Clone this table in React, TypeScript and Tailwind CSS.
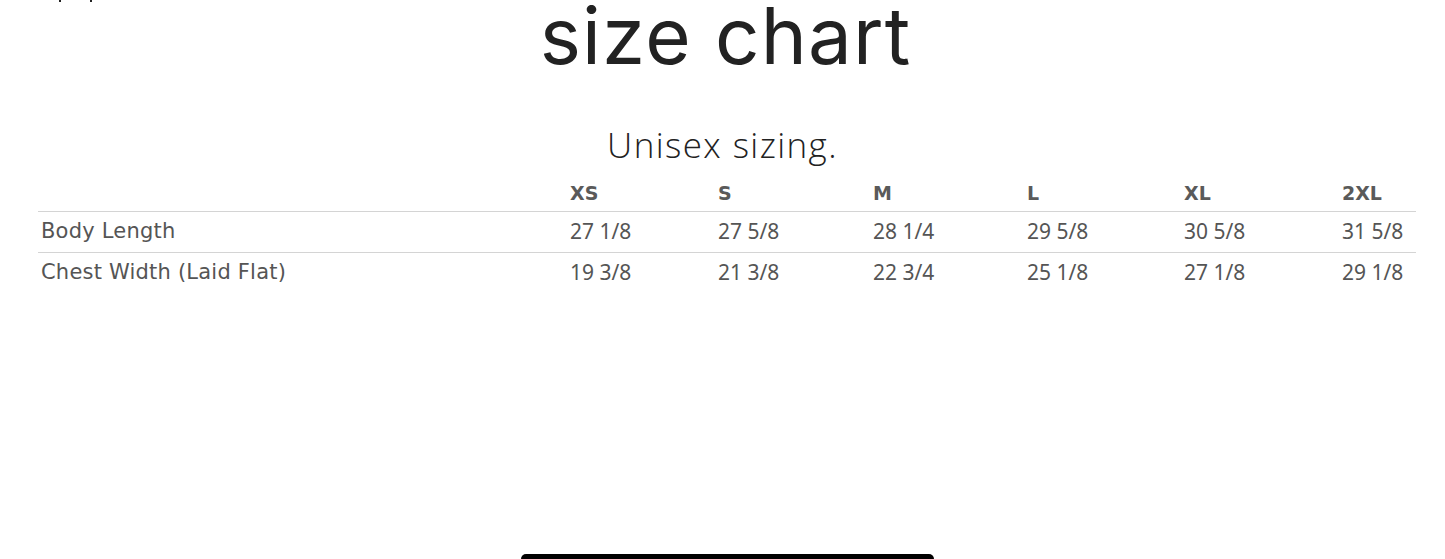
const sizes = ['XS', 'S', 'M', 'L', 'XL', '2XL'];

const rows = [
  { label: 'Body Length', values: ['27 1/8', '27 5/8', '28 1/4', '29 5/8', '30 5/8', '31 5/8'] },
  { label: 'Chest Width (Laid Flat)', values: ['19 3/8', '21 3/8', '22 3/4', '25 1/8', '27 1/8', '29 1/8'] },
];

const cols = 'grid grid-cols-[532px_148px_155px_154px_157px_158px_1fr]';

export default function App() {
  return (
    <div className="relative h-[559px] w-full overflow-hidden bg-white">
      <div className="flex h-[2px] gap-[29px] pl-[59px]">
        <span className="h-[2px] w-[2px] bg-[#222]" />
        <span className="h-[2px] w-[2px] bg-[#222]" />
      </div>

      <h1 className="mt-[2px] pl-[6px] text-center font-['Inter',sans-serif] text-[78px] font-normal leading-[64px] tracking-[0.015em] text-[#222]">
        size chart
      </h1>

      <p className="mt-[59px] text-center font-['Open_Sans',sans-serif] text-[35px] font-light leading-none tracking-[0.04em] text-[#222]">
        Unisex sizing.
      </p>

      <div className="ml-[38px] mr-[29px] mt-[17px] text-[#555]">
        <div className={`${cols} h-[32px] items-end pb-[4px] font-['DejaVu_Sans',sans-serif] text-[19px] font-bold text-[#5a5a5a]`}>
          <span />
          {sizes.map((s) => (
            <span key={s}>{s}</span>
          ))}
        </div>
        {rows.map((r) => (
          <div key={r.label} className={`${cols} h-[41px] items-center border-t border-[#d4d4d4]`}>
            <span className="pl-[3px] font-['DejaVu_Sans',sans-serif] text-[21px] tracking-[0.01em]">{r.label}</span>
            {r.values.map((v, i) => (
              <span key={i} className="font-['Noto_Sans',sans-serif] text-[21px]">
                {v}
              </span>
            ))}
          </div>
        ))}
      </div>

      <div className="absolute bottom-0 left-[521px] h-[5px] w-[413px] rounded-t-full bg-black" />
    </div>
  );
}
